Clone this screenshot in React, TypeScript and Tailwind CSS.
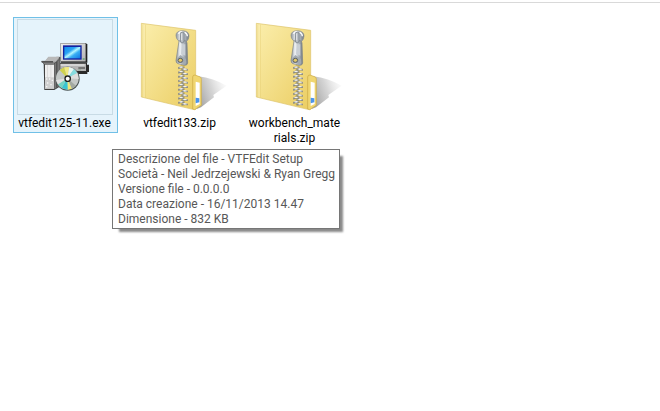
import clsx from "clsx";

type FileEntry = {
  name: string;
  kind: "installer" | "zip";
  selected?: boolean;
  details?: string[];
};

const files: FileEntry[] = [
  {
    name: "vtfedit125-11.exe",
    kind: "installer",
    selected: true,
    details: [
      "Descrizione del file - VTFEdit Setup",
      "Società - Neil Jedrzejewski & Ryan Gregg",
      "Versione file - 0.0.0.0",
      "Data creazione - 16/11/2013 14.47",
      "Dimensione - 832 KB",
    ],
  },
  { name: "vtfedit133.zip", kind: "zip" },
  { name: "workbench_materials.zip", kind: "zip" },
];

// y positions of the left-hand zipper teeth, the right-hand ones sit in between
const teeth = [154, 167, 180, 193, 206, 219, 232, 245, 258];

function InstallerIcon() {
  return (
    <svg viewBox="-54 -48 288 288" className="h-full w-full" aria-hidden="true">
      <defs>
        <linearGradient id="screen" x1="0" y1="0" x2="1" y2="1">
          <stop offset="0" stopColor="#0f8cee" />
          <stop offset="0.35" stopColor="#2ba4f4" />
          <stop offset="0.5" stopColor="#b4f6fe" />
          <stop offset="0.65" stopColor="#38aef4" />
          <stop offset="1" stopColor="#0f76e4" />
        </linearGradient>
        <linearGradient id="bezel" x1="0" y1="0" x2="1" y2="1">
          <stop offset="0" stopColor="#ececec" />
          <stop offset="1" stopColor="#b4b4b4" />
        </linearGradient>
      </defs>
      {/* base unit */}
      <path d="M72 83h84v6h6v22h-5v6H72z" fill="#2a2a2a" />
      <path d="M72 86h81v22H72z" fill="#b4b4b4" />
      <path d="M76 88h73v4H76z" fill="#e4e4e4" />
      <path d="M130 97h20v4h-20z" fill="#555" />
      <path d="M130 103h8v3h-8z" fill="#8fa894" />
      {/* monitor */}
      <path d="M78 24h76v3h3v56H78z" fill="#202020" />
      <path d="M76 24h76v56H76z" fill="#8a8a8a" />
      <path d="M78 26h73v52H78z" fill="url(#bezel)" />
      <path d="M84 31h56v43H84z" fill="#1422a0" />
      <path d="M88 36h48v34H88z" fill="url(#screen)" />
      <path d="M143 70h6v4h-6z" fill="#58a068" />
      {/* box */}
      <path d="M26 86l15-20h35v88l-18 11H28z" fill="#404040" />
      <path d="M58 85l16-17v84l-16 11z" fill="#777" />
      <path d="M64 82l3-3v78l-3 2z" fill="#444" />
      <path d="M30 86h27v75H30z" fill="#eeeeee" />
      <path d="M36 90h3v68h-3zM46 90h3v68h-3z" fill="#dcdcdc" />
      <path d="M30 127h27v34H30z" fill="#cfcfcf" />
      <path d="M33 130h4v4h-4zM42 130h4v4h-4zM50 134h4v4h-4zM36 142h4v4h-4zM46 147h4v4h-4zM33 153h4v4h-4z" fill="#f5f5f5" />
      <path d="M20 79h33l11-12h10v5L56 88H28z" fill="#888" stroke="#444" strokeWidth="2" />
      <path d="M40 65h34l-12 15H28z" fill="#b9b9b9" />
      <path d="M20 78h34v5H20z" fill="#555" />
      {/* disc */}
      <circle cx="98" cy="131" r="36" fill="#4c5555" />
      <circle cx="97" cy="130" r="34" fill="#c4c8c6" />
      <path d="M97 130L87 97l16-1z" fill="#f0e882" />
      <path d="M97 130L74 105l13-8z" fill="#d0d24e" />
      <path d="M97 130l6-34 14 6z" fill="#e8f4f0" />
      <path d="M97 130l20-28 10 12z" fill="#86dce0" />
      <path d="M97 130l30-16 4 18z" fill="#dedede" />
      <path d="M97 130l14 31-13 3z" fill="#eee77a" />
      <path d="M97 130l1 34-18-5z" fill="#38c5d2" />
      <path d="M97 130l-17 29-11-11z" fill="#74d4c4" />
      <path d="M97 130l-34 5 6 13z" fill="#e2e2e2" />
      <path d="M97 130l26 22-12 9z" fill="#a2a8a0" />
      <circle cx="98" cy="131" r="10" fill="#202020" />
      <circle cx="98" cy="131" r="6" fill="#fff" />
    </svg>
  );
}

function ZipIcon() {
  return (
    <svg viewBox="6 12 288 288" className="h-full w-full" aria-hidden="true">
      <defs>
        <linearGradient id="folder" x1="0" y1="0" x2="1" y2="1">
          <stop offset="0" stopColor="#fbeeac" />
          <stop offset="0.5" stopColor="#f3de88" />
          <stop offset="1" stopColor="#ebcd62" />
        </linearGradient>
        <linearGradient id="metal" x1="0" y1="0" x2="1" y2="0">
          <stop offset="0" stopColor="#8c949b" />
          <stop offset="0.35" stopColor="#f1f4f6" />
          <stop offset="0.65" stopColor="#b3bac1" />
          <stop offset="1" stopColor="#6f777f" />
        </linearGradient>
        <linearGradient id="shade" x1="0" y1="0.6" x2="1" y2="0.2">
          <stop offset="0" stopColor="#8c8c8c" stopOpacity="0.8" />
          <stop offset="0.5" stopColor="#aaa" stopOpacity="0.5" />
          <stop offset="1" stopColor="#ccc" stopOpacity="0.05" />
        </linearGradient>
      </defs>
      <path d="M205 184Q250 190 290 212L250 240L252 247L213 277L200 282z" fill="url(#shade)" />
      {/* body */}
      <path d="M34 25L197 46V283H188L34 246z" fill="url(#folder)" stroke="#dcc36a" strokeWidth="2" />
      <path d="M39 28V246M46 29V248" stroke="#e3ca72" strokeWidth="1.5" />
      <path d="M42 29V247" stroke="#fff5c4" strokeWidth="2" />
      {/* side tab with its paper label */}
      <path d="M188 186Q188 180 195 180L211 186Q214 188 214 193V271L194 284L188 282z" fill="#f0d671" stroke="#cba943" strokeWidth="2" />
      <path d="M197 200L209 203V267L197 273z" fill="#fff" />
      <path d="M197 248L208 250V262L197 265z" fill="#4b95ed" />
      {/* zipper */}
      <path d="M152 150h12v123l-12-3z" fill="#d3b957" />
      {teeth.map((y) => (
        <g key={y}>
          <path d={`M144 ${y + 3}l10-4 9 3v5l-10-1-8 3z`} fill="#8b8c86" />
          <path d={`M146 ${y + 2}l8-2 7 2-8 3z`} fill="#f4f4f2" />
          <path d={`M154 ${y + 9}l8-3 12 2v5l-11-1-8 2z`} fill="#8b8c86" />
          <path d={`M157 ${y + 8}l7-2 9 3-9 2z`} fill="#f4f4f2" />
        </g>
      ))}
      <path d="M138 61Q138 48 157 47Q177 48 177 63Q177 72 170 79L158 83L144 76Q138 70 138 61z" fill="url(#metal)" stroke="#868d94" strokeWidth="2" />
      <path d="M145 56Q150 50 157 50M164 52Q172 55 172 64" fill="none" stroke="#fff" strokeWidth="4" />
      <path d="M147 78L166 77Q170 78 171 84L173 144Q172 151 165 151L144 146Q138 144 138 137z" fill="url(#metal)" stroke="#7b838a" strokeWidth="2" />
      <path d="M157 88L166 88L166 122L153 116z" fill="#c9cfd5" />
      <path d="M142 130L151 120L168 132L169 145L164 148L144 143z" fill="#a2aab1" />
      <ellipse cx="151" cy="136" rx="7" ry="6" fill="#e2c96a" stroke="#5b6063" strokeWidth="3" />
      <path d="M152 53Q157 49 162 54V78Q161 84 156 84Q151 83 151 78z" fill="#b3bac1" stroke="#6a727a" strokeWidth="2" />
      <path d="M155 55V76" stroke="#fff" strokeWidth="2" />
    </svg>
  );
}

function FileTile({ file }: { file: FileEntry }) {
  return (
    <li className="relative w-[105px]">
      <button
        type="button"
        aria-pressed={!!file.selected}
        className={clsx(
          "flex w-full flex-col items-center gap-px border pt-px pr-[5px] pb-px pl-[3px]",
          file.selected ? "border-[#70c0e7] bg-[#e5f3fb]" : "border-transparent",
        )}
      >
        <span className={clsx("size-24", file.selected && "inset-ring inset-ring-[#c8dbe5]")}>
          {file.kind === "zip" ? <ZipIcon /> : <InstallerIcon />}
        </span>
        <span className="w-[94px] text-center leading-[15px] break-all">{file.name}</span>
      </button>
      {file.details && (
        <div
          role="tooltip"
          className="absolute top-[132px] left-[99px] z-10 border border-[#767676] bg-white px-[4px] pt-[2px] pb-px pl-[5px] leading-[15px] whitespace-nowrap text-[#575757] shadow-[5px_5px_2px_-2px_#8a8a8a]"
        >
          {file.details.map((line) => (
            <p key={line}>{line}</p>
          ))}
        </div>
      )}
    </li>
  );
}

export default function App() {
  return (
    <main className="min-h-screen bg-white pt-[2px] font-['Roboto','Open_Sans',sans-serif] text-[12px] text-black">
      <ul className="flex flex-wrap gap-[10px] border-t border-[#d9d9d9] px-[13px] pt-[14px]">
        {files.map((file) => (
          <FileTile key={file.name} file={file} />
        ))}
      </ul>
    </main>
  );
}
